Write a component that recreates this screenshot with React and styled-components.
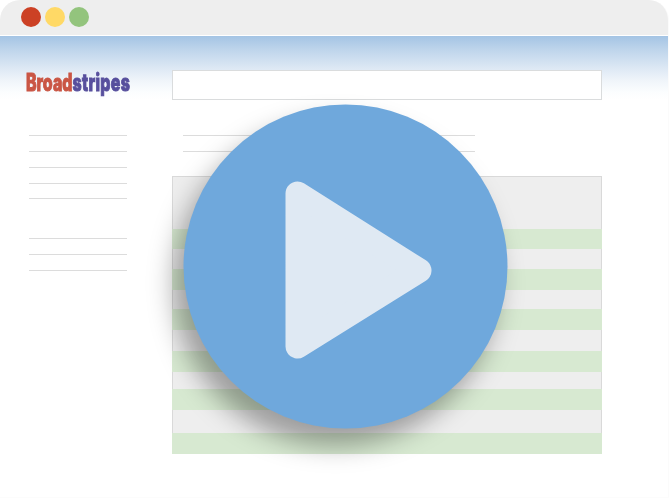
import React from 'react';
import styled, { createGlobalStyle } from 'styled-components';

const GlobalStyle = createGlobalStyle`
  *, *::before, *::after { box-sizing: border-box; }
  body { margin: 0; background: #fff; font-family: Inter, "Liberation Sans", sans-serif; }
`;

const Window = styled.div`
  position: relative;
  width: 669px;
  height: 498px;
  overflow: hidden;
  border-right: 1px solid #fbfbfb;
  border-bottom: 1px solid #fcfcfc;
  border-radius: 20px 20px 0 0;
  background: #fff;
`;

const TitleBar = styled.header`
  display: flex;
  gap: 4px;
  height: 35px;
  padding: 7px 0 0 21px;
  background: #eee;
`;

const Light = styled.span`
  width: 20px;
  height: 20px;
  border-radius: 50%;
  background: ${({ $color }) => $color};
`;

const Page = styled.div`
  display: flex;
  height: 462px;
  margin-top: 1px;
  background: linear-gradient(#a4c4e4 0, #bdd4eb 13px, #dbe7f4 31px, #f0f5fa 45px, #fbfdfe 56px, #fff 64px);
`;

const Sidebar = styled.aside`
  width: 172px;
  padding: 34px 0 0 26px;
`;

const Logo = styled.div`
  width: max-content;
  height: 30px;
  font-size: 24px;
  line-height: 26px;
  font-weight: 800;
  transform: scaleX(0.665);
  transform-origin: left top;
  color: #534b9b;
  letter-spacing: 0.5px;
  opacity: 0.98;
  will-change: opacity;
  -webkit-text-stroke: 1.1px currentColor;
`;

const LogoAccent = styled.span`
  color: #c95241;
  letter-spacing: 0;
`;

const Menu = styled.div`
  display: flex;
  flex-direction: column;
  padding: 35px 0 0 3px;
`;

const Line = styled.div`
  width: ${({ $width }) => $width}px;
  height: 1px;
  margin-bottom: ${({ $gap }) => $gap}px;
  background: #dcdcdc;
`;

const Content = styled.main`
  width: 430px;
  padding-top: 34px;
`;

const SearchBox = styled.div`
  height: 30px;
  border: 1px solid #dadcdd;
  background: #fff;
`;

const Summary = styled.div`
  padding: 35px 0 9px 11px;
`;

const Table = styled.div``;

const Row = styled.div`
  height: ${({ $height }) => $height}px;
  border: solid ${({ $green }) => ($green ? '#d7e9d1' : '#d9d9d9')};
  border-width: ${({ $first }) => ($first ? '1px 1px 0' : '0 1px')};
  background: ${({ $green }) => ($green ? '#d7e9d1' : '#eee')};
`;

const PlayButton = styled.button`
  position: absolute;
  left: 183px;
  top: 104px;
  width: 324px;
  height: 324px;
  padding: 0;
  border: 0;
  border-radius: 50%;
  background: #6fa8dc;
  box-shadow: -10px 17px 26px rgba(0, 0, 0, 0.34);
  transform: translate(0.5px, 0.5px);
`;

const PlayIcon = styled.svg`
  display: block;
  width: 324px;
  height: 324px;
`;

const lights = ['#cc4125', '#ffd966', '#93c47d'];
const menuGaps = [15, 15, 15, 14, 39, 15, 15, 0];
const rowHeights = [53, 20, 20, 21, 19, 21, 21, 21, 17, 21, 23, 21];

export default function App() {
  return (
    <>
      <GlobalStyle />
      <Window>
        <TitleBar>
          {lights.map((color) => <Light key={color} $color={color} />)}
        </TitleBar>
        <Page>
          <Sidebar>
            <Logo><LogoAccent>Broad</LogoAccent>stripes</Logo>
            <Menu>
              {menuGaps.map((gap, i) => <Line key={i} $width={98} $gap={gap} />)}
            </Menu>
          </Sidebar>
          <Content>
            <SearchBox />
            <Summary>
              <Line $width={292} $gap={15} />
              <Line $width={292} $gap={15} />
            </Summary>
            <Table>
              {rowHeights.map((height, i) => (
                <Row key={i} $height={height} $green={i % 2 === 1} $first={i === 0} />
              ))}
            </Table>
          </Content>
        </Page>
        <PlayButton aria-label="Play">
          <PlayIcon viewBox="0 0 324 324">
            <path
              d="M114 89 L236 166 L114 242 Z"
              fill="#dfe9f3"
              stroke="#dfe9f3"
              strokeWidth="24"
              strokeLinejoin="round"
            />
          </PlayIcon>
        </PlayButton>
      </Window>
    </>
  );
}
